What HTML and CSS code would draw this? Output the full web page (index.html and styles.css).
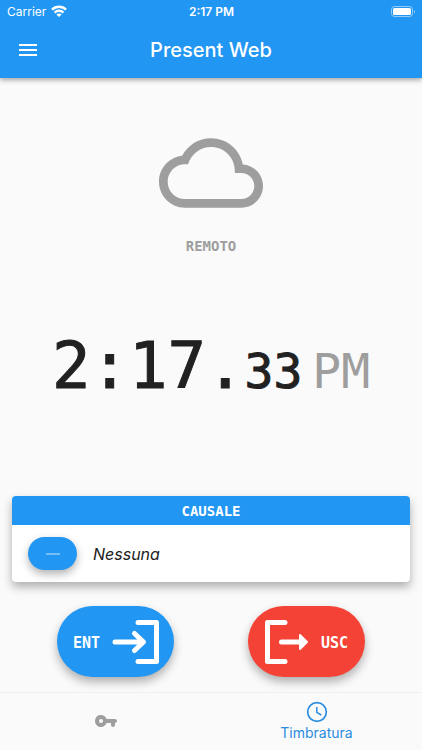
FILE: index.html
```html
<!DOCTYPE html>
<html lang="it">
<head>
    <meta charset="UTF-8">
    <meta name="viewport" content="width=device-width, initial-scale=1.0">
    <title>Present Web</title>
    <link rel="stylesheet" href="styles.css">
</head>
<body>

    <header class="header">
        <div class="status-bar">
            <div class="carrier">
                <span>Carrier</span>
                <svg width="16" height="12" viewBox="0 0 16 12" fill="none" stroke="#fff" stroke-width="2.4">
                    <path d="M1 4.6a10 10 0 0 1 14 0"/>
                    <path d="M3.6 7.6a6.3 6.3 0 0 1 8.8 0"/>
                    <path d="M8 12 5.4 9.6a3.5 3.5 0 0 1 5.200 0z" fill="#fff" stroke="none"/>
                </svg>
            </div>
            <div class="time">2:17 PM</div>
            <div class="battery">
                <svg width="25" height="11" viewBox="0 0 25 11">
                    <rect x="0.5" y="0.5" width="21" height="10" rx="3" fill="none" stroke="#fff" stroke-opacity="0.5"/>
                    <rect x="2" y="2" width="18" height="7" rx="1.5" fill="#fff"/>
                    <path d="M23 4v3.500a2 2 0 0 0 0-3.500z" fill="#fff" fill-opacity="0.5"/>
                </svg>
            </div>
        </div>
        <div class="toolbar">
            <button class="menu-button" aria-label="Menu">
                <svg width="24" height="24" viewBox="0 0 24 24" fill="#fff">
                    <path d="M3 18h18v-2H3v2zm0-5h18v-2H3v2zm0-7v2h18V6H3z"/>
                </svg>
            </button>
            <h1 class="title">Present Web</h1>
        </div>
    </header>

    <main class="content">
        <section class="location">
            <svg class="cloud" width="104" height="104" viewBox="0 0 24 24" fill="#9e9e9e">
                <path d="M19.35 10.04C18.67 6.59 15.64 4 12 4 9.11 4 6.6 5.64 5.35 8.04 2.34 8.36 0 10.91 0 14c0 3.31 2.69 6 6 6h13c2.76 0 5-2.24 5-5 0-2.64-2.05-4.78-4.65-4.96zM19 18H6c-2.21 0-4-1.79-4-4s1.79-4 4-4h.71C7.37 7.69 9.48 6 12 6c3.04 0 5.5 2.46 5.5 5.5v.5H19c1.66 0 3 1.34 3 3s-1.34 3-3 3z"/>
            </svg>
            <div class="location-name">REMOTO</div>
        </section>

        <section class="clock">
            <span class="hours">2:17.</span>
            <span class="seconds">33</span>
            <span class="period">PM</span>
        </section>

        <section class="card">
            <h2 class="card-title">CAUSALE</h2>
            <div class="card-body">
                <button class="reason-button" aria-label="Causale">
                    <svg width="16" height="4" viewBox="0 0 16 4"><path d="M1 2h14" stroke="#90caf9" stroke-width="1.500"/></svg>
                </button>
                <span class="reason">Nessuna</span>
            </div>
        </section>

        <div class="actions">
            <button class="action enter">
                <span>ENT</span>
                <svg width="48" height="44" viewBox="0 0 48 44" fill="none" stroke="#fff" stroke-width="5" stroke-linecap="round" stroke-linejoin="round">
                    <path d="M26 2.500h18.500v39H26"/>
                    <path d="M3 22h28M22.500 13.500l9 8.500-9 8.500"/>
                </svg>
            </button>
            <button class="action exit">
                <svg width="44" height="44" viewBox="0 0 44 44" fill="none" stroke="#fff" stroke-width="5" stroke-linecap="round" stroke-linejoin="round">
                    <path d="M20 2.500H2.500v39H20"/>
                    <path d="M16.500 22h19"/>
                    <path d="M35 15v14l7-7z" fill="#fff" stroke-width="2"/>
                </svg>
                <span>USC</span>
            </button>
        </div>
    </main>

    <nav class="tabs">
        <a class="tab" href="#chiave" aria-label="Chiave">
            <svg width="24" height="24" viewBox="0 0 24 24" fill="#9e9e9e">
                <path d="M12.650 10C11.700 7.310 8.900 5.500 5.770 6.120 3.480 6.580 1.620 8.410 1.140 10.700.320 14.570 3.260 18 7 18c2.610 0 4.830-1.670 5.650-4H17v2c0 1.100.900 2 2 2s2-.900 2-2v-2c1.100 0 2-.900 2-2s-.900-2-2-2h-8.350zM7 14c-1.100 0-2-.900-2-2s.900-2 2-2 2 .900 2 2-.900 2-2 2z"/>
            </svg>
        </a>
        <a class="tab active" href="#timbratura">
            <svg width="24" height="24" viewBox="0 0 24 24" fill="none" stroke="#2b8de0">
                <circle cx="12" cy="12" r="9.300" stroke-width="1.700"/>
                <path d="M11.800 7v5.300l4.500 2.700" stroke-width="1.500"/>
            </svg>
            <span>Timbratura</span>
        </a>
    </nav>

</body>
</html>
```
FILE: styles.css
```css
* {
    box-sizing: border-box;
}
body {
    margin: 0;
    min-height: 100vh;
    display: flex;
    flex-direction: column;
    background: #fafafa;
    color: #212121;
    font-family: Inter, Roboto, sans-serif;
}
button {
    border: none;
    padding: 0;
    color: white;
    cursor: pointer;
}
svg {
    display: block;
}
.header {
    background: #2196f3;
    color: white;
    box-shadow: 0 2px 5px rgba(0, 0, 0, 0.35);
}
.status-bar {
    display: grid;
    grid-template-columns: 1fr auto 1fr;
    align-items: center;
    height: 22px;
    padding: 0 6px 0 7px;
    font-size: 12px;
}
.carrier {
    display: flex;
    align-items: center;
    gap: 5px;
}
.time {
    font-weight: 600;
}
.battery {
    justify-self: end;
}
.toolbar {
    display: grid;
    grid-template-columns: 56px 1fr 56px;
    align-items: center;
    height: 56px;
}
.menu-button {
    justify-self: center;
    background: none;
}
.title {
    margin: 0;
    text-align: center;
    font-size: 20px;
    font-weight: 500;
}
.content {
    flex: 1;
    display: flex;
    flex-direction: column;
    padding: 43px 0 15px;
}
.location {
    display: flex;
    flex-direction: column;
    align-items: center;
    gap: 12px;
}
.location-name,
.card-title {
    font-family: "DejaVu Sans Mono", monospace;
    font-size: 14px;
    font-weight: bold;
    line-height: 18px;
}
.location-name {
    color: #9e9e9e;
}
.clock {
    display: flex;
    justify-content: center;
    align-items: baseline;
    margin: auto 0;
    padding-bottom: 15px;
    font-family: "DejaVu Sans Mono", monospace;
    font-size: 48px;
    line-height: 76px;
    -webkit-text-stroke: 1px;
}
.hours {
    font-size: 64px;
}
.period {
    margin-left: 10px;
    color: #9e9e9e;
    -webkit-text-stroke: 0;
}
.card {
    margin: 0 12px;
    border-radius: 4px;
    overflow: hidden;
    background: white;
    box-shadow: 0 5px 10px rgba(0, 0, 0, 0.3);
}
.card-title {
    margin: 0;
    padding: 6px 0 5px;
    background: #2196f3;
    color: white;
    text-align: center;
}
.card-body {
    display: flex;
    align-items: center;
    gap: 16px;
    padding: 12px 16px;
}
.reason-button {
    display: flex;
    align-items: center;
    justify-content: center;
    width: 49px;
    height: 33px;
    border-radius: 17px;
    background: #2196f3;
    box-shadow: 0 4px 8px rgba(0, 0, 0, 0.3);
}
.reason {
    font-size: 16px;
    font-style: italic;
}
.actions {
    display: flex;
    justify-content: space-around;
    margin-top: 24px;
    padding: 0 20px;
}
.action {
    display: flex;
    align-items: center;
    justify-content: space-between;
    width: 117px;
    height: 71px;
    padding: 0 14px 0 16px;
    border-radius: 36px;
    box-shadow: 0 5px 10px rgba(0, 0, 0, 0.3);
    font-family: "DejaVu Sans Mono", monospace;
    font-size: 15px;
    font-weight: bold;
}
.action span {
    padding-top: 3px;
}
.enter {
    background: #2196f3;
}
.exit {
    padding: 0 17px;
    background: #f44336;
}
.tabs {
    display: flex;
    height: 58px;
    border-top: 1px solid #eeeeee;
}
.tab {
    flex: 1;
    display: flex;
    flex-direction: column;
    align-items: center;
    justify-content: center;
    padding-bottom: 2px;
    color: #9e9e9e;
    font-size: 14px;
    line-height: 17px;
    text-decoration: none;
}
.active {
    color: #2b8de0;
}
```
